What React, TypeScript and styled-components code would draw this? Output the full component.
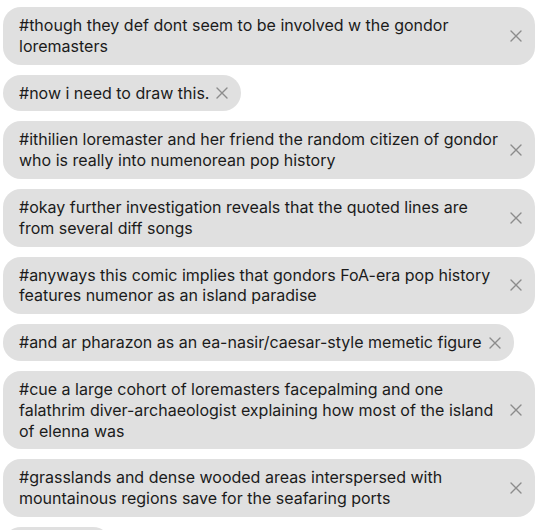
import React from "react";
import styled, { createGlobalStyle } from "styled-components";

const GlobalStyle = createGlobalStyle`
  html, body {
    margin: 0;
    padding: 0;
    background: #ffffff;
  }
  body {
    font-family: Inter, "Noto Sans", "Liberation Sans", sans-serif;
    -webkit-font-smoothing: antialiased;
  }
`;

const TagList = styled.ul`
  list-style: none;
  margin: 0;
  padding: 7px 5px 0 3px;
  display: flex;
  flex-direction: column;
  align-items: flex-start;
  gap: 10px;
  height: 530px;
  overflow: hidden;
  box-sizing: border-box;
`;

const Tag = styled.li`
  display: inline-flex;
  align-items: center;
  max-width: 100%;
  box-sizing: border-box;
  padding: 8px 12px 8px 16px;
  background: #e0e0e0;
  border-radius: 18px;
  color: #1b1b1b;
  font-size: 16px;
  line-height: 20.8px;
`;

const TagText = styled.span`
  flex: 1 1 auto;
  min-width: 0;
`;

const RemoveButton = styled.button`
  flex: 0 0 auto;
  display: flex;
  align-items: center;
  justify-content: center;
  width: 14px;
  height: 14px;
  margin-left: 6px;
  padding: 0;
  border: none;
  background: none;
  color: #8c8c8c;
  cursor: pointer;
`;

const tags = [
  "#though they def dont seem to be involved w the gondor loremasters",
  "#now i need to draw this.",
  "#ithilien loremaster and her friend the random citizen of gondor who is really into numenorean pop history",
  "#okay further investigation reveals that the quoted lines are from several diff songs",
  "#anyways this comic implies that gondors FoA-era pop history features numenor as an island paradise",
  "#and ar pharazon as an ea-nasir/caesar-style memetic figure",
  "#cue a large cohort of loremasters facepalming and one falathrim diver-archaeologist explaining how most of the island of elenna was",
  "#grasslands and dense wooded areas interspersed with mountainous regions save for the seafaring ports",
  "#tolkien",
];

function CloseIcon() {
  return (
    <svg width="12" height="12" viewBox="0 0 12 12" fill="none">
      <path d="M1 1l10 10M11 1L1 11" stroke="currentColor" strokeWidth="1.4" strokeLinecap="round" />
    </svg>
  );
}

export default function App() {
  return (
    <>
      <GlobalStyle />
      <TagList>
        {tags.map((t) => (
          <Tag key={t}>
            <TagText>{t}</TagText>
            <RemoveButton type="button" aria-label="Remove tag">
              <CloseIcon />
            </RemoveButton>
          </Tag>
        ))}
      </TagList>
    </>
  );
}
